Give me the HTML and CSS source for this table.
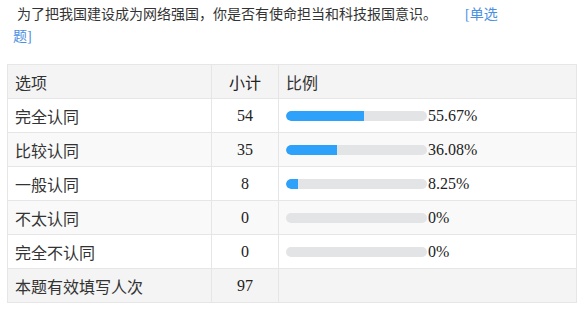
FILE: index.html
```html
<!DOCTYPE html>
<html lang="zh-CN">
<head>
<meta charset="utf-8">
<link rel="stylesheet" href="styles.css">
</head>
<body>
<div class="title">为了把我国建设成为网络强国，你是否有使命担当和科技报国意识。<span class="qtype">[单选题]</span></div>
<table class="stats">
  <colgroup><col class="c1"><col class="c2"><col class="c3"></colgroup>
  <thead>
    <tr><th class="opt">选项</th><th class="num">小计</th><th class="opt">比例</th></tr>
  </thead>
  <tbody>
    <tr><td>完全认同</td><td class="num">54</td><td><span class="bar"><span class="fill" style="width:55.67%"></span></span><span class="pct">55.67%</span></td></tr>
    <tr class="alt"><td>比较认同</td><td class="num">35</td><td><span class="bar"><span class="fill" style="width:36.08%"></span></span><span class="pct">36.08%</span></td></tr>
    <tr><td>一般认同</td><td class="num">8</td><td><span class="bar"><span class="fill" style="width:8.25%"></span></span><span class="pct">8.25%</span></td></tr>
    <tr class="alt"><td>不太认同</td><td class="num">0</td><td><span class="bar"><span class="fill" style="width:0%"></span></span><span class="pct">0%</span></td></tr>
    <tr><td>完全不认同</td><td class="num">0</td><td><span class="bar"><span class="fill" style="width:0%"></span></span><span class="pct">0%</span></td></tr>
    <tr class="total"><td>本题有效填写人次</td><td class="num">97</td><td></td></tr>
  </tbody>
</table>
</body>
</html>
```
FILE: styles.css
```css
html, body {
  margin: 0;
  padding: 0;
  background: #ffffff;
}
body {
  font-family: "Liberation Serif", "Noto Sans CJK SC", serif;
  color: #333333;
}
.title {
  width: 494px;
  margin: 4px 0 0 13px;
  font-size: 14px;
  line-height: 22px;
  text-indent: 4px;
  color: #333333;
}
.qtype {
  margin-left: 28px;
  color: #4a90e2;
}
.stats {
  margin: 16px 0 0 7px;
  width: 569px;
  border-collapse: collapse;
  table-layout: fixed;
  font-size: 16px;
  border: 1px solid #e6e6e6;
}
.c1 { width: 204px; }
.c2 { width: 67px; }
.c3 { width: 298px; }
.stats th, .stats td {
  height: 33px;
  padding: 0 7px;
  border: 1px solid #e6e6e6;
  text-align: left;
  vertical-align: middle;
  font-weight: normal;
  white-space: nowrap;
  color: #333333;
}
.stats thead th { background: #f4f4f4; }
.stats .num { text-align: center; color: #222222; }
.stats tr.alt td { background: #f9f9f9; }
.stats tr.total td { background: #f4f4f4; }
.bar {
  display: inline-block;
  width: 141px;
  height: 10px;
  border-radius: 5px;
  background: #e3e4e6;
  vertical-align: middle;
  overflow: hidden;
}
.fill {
  display: block;
  height: 100%;
  background: #2ea2fa;
  border-radius: 5px 0 0 5px;
}
.pct {
  margin-left: 1px;
  vertical-align: middle;
  color: #222222;
}
```
